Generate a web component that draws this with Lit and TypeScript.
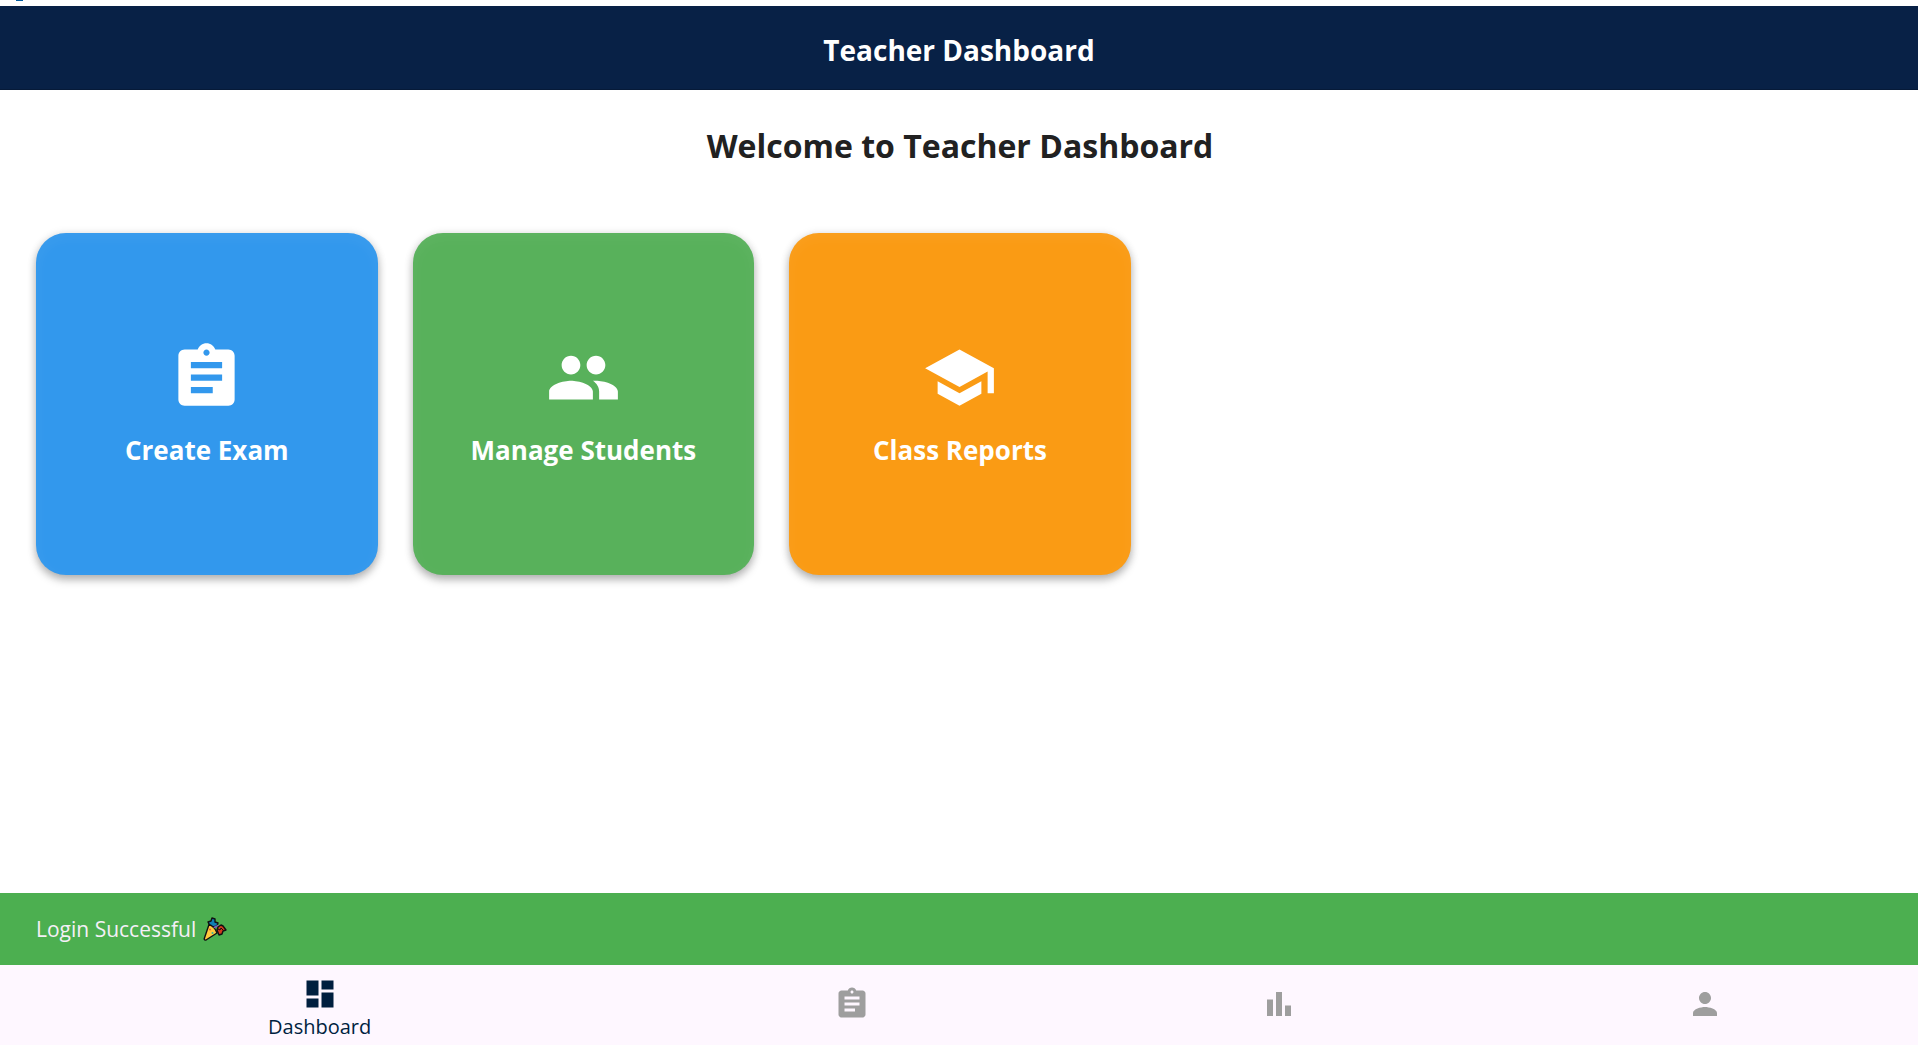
import { LitElement, html, css, svg } from "lit";
import { customElement, state } from "lit/decorators.js";
import { classMap } from "lit/directives/class-map.js";

const assignment = svg`<path fill-rule="evenodd" d="M19 3h-4.180C14.400 1.840 13.300 1 12 1c-1.300 0-2.400.840-2.820 2H5c-1.100 0-2 .900-2 2v14c0 1.100.900 2 2 2h14c1.100 0 2-.900 2-2V5c0-1.100-.900-2-2-2zm-7 0c.550 0 1 .450 1 1s-.450 1-1 1-1-.450-1-1 .450-1 1-1zm2 14H7v-2h7v2zm3-4H7v-2h10v2zm0-4H7V7h10v2z"/>`;
const people = svg`<path d="M16 11c1.660 0 2.990-1.340 2.990-3S17.660 5 16 5s-3 1.340-3 3 1.340 3 3 3zm-8 0c1.660 0 2.990-1.340 2.990-3S9.660 5 8 5 5 6.340 5 8s1.340 3 3 3zm0 2c-2.330 0-7 1.170-7 3.500V19h14v-2.500C15 14.170 10.330 13 8 13zm8 0c-.290 0-.620.020-.970.050C16.190 13.890 17 15.020 17 16.500V19h6v-2.500c0-2.330-4.670-3.500-7-3.500z"/>`;
const school = svg`<path d="M5 13.180v4L12 21l7-3.820v-4L12 17l-7-3.820zM12 3L1 9l11 6 9-4.910V17h2V9L12 3z"/>`;
const dashboard = svg`<path d="M3 13h8V3H3v10zm0 8h8v-6H3v6zm10 0h8V11h-8v10zm0-18v6h8V3h-8z"/>`;
const bars = svg`<path d="M4 9h4v11H4zM16 13h4v7h-4zM10 4h4v16h-4z"/>`;
const person = svg`<path d="M12 12c2.210 0 4-1.790 4-4s-1.790-4-4-4-4 1.790-4 4 1.790 4 4 4zm0 2c-2.670 0-8 1.340-8 4v2h16v-2c0-2.660-5.330-4-8-4z"/>`;

const actions = [
  { label: "Create Exam", tone: "blue", icon: assignment },
  { label: "Manage Students", tone: "green", icon: people },
  { label: "Class Reports", tone: "orange", icon: school },
];

const tabs = [
  { label: "Dashboard", icon: dashboard },
  { label: "Exams", icon: assignment },
  { label: "Reports", icon: bars },
  { label: "Profile", icon: person },
];

@customElement("app-root")
export class AppRoot extends LitElement {
  @state() private selected = 0;

  static styles = css`
    :host {
      display: flex;
      flex-direction: column;
      min-height: 100vh;
      background: #ffffff;
      color: #212121;
      font-family: "Segoe UI", "Open Sans", "Noto Sans", sans-serif;
    }
    h1, h2 { margin: 0; font-weight: 700; text-align: center; }
    button { border: 0; margin: 0; font: inherit; cursor: pointer; }
    svg { display: block; fill: currentColor; }
    .strip { height: 6px; padding-left: 16px; }
    .mark { width: 7px; height: 1px; background: #005a9e; }
    .bar {
      display: flex;
      align-items: center;
      justify-content: center;
      height: 84px;
      box-sizing: border-box;
      padding-top: 4px;
      background: #082146;
      border-bottom: 1px solid #061a38;
      color: #ffffff;
    }
    .bar h1 { font-size: 28px; line-height: 40px; }
    main { flex: 1; padding: 34px 34px 34px 36px; }
    .welcome { font-size: 32px; line-height: 44px; }
    .grid {
      display: grid;
      grid-template-columns: repeat(auto-fill, minmax(300px, 1fr));
      gap: 35px;
      margin-top: 65px;
    }
    .card {
      display: flex;
      flex-direction: column;
      align-items: center;
      justify-content: center;
      gap: 17px;
      aspect-ratio: 1;
      padding: 0;
      border-radius: 30px;
      color: #ffffff;
      font-size: 26px;
      line-height: 36px;
      font-weight: 700;
      box-shadow: 0 5px 8px rgba(0, 0, 0, 0.25), 0 1px 10px rgba(0, 0, 0, 0.12),
        inset 0 4px 16px rgba(255, 255, 255, 0.05);
    }
    .card svg { width: 75px; height: 75px; }
    .blue { background: #3298ed; }
    .green { background: #58b15b; }
    .orange { background: #fa9b14; }
    .snack {
      display: flex;
      align-items: center;
      gap: 7px;
      height: 72px;
      padding: 0 36px;
      background: #4caf50;
      color: #f5eff7;
      font-size: 21px;
      line-height: 30px;
    }
    .party { width: 24px; height: 24px; }
    nav { display: flex; height: 80px; background: #fef7ff; }
    .tab {
      flex: 2;
      display: flex;
      flex-direction: column;
      align-items: center;
      padding: 21px 0 0;
      background: none;
      color: #9e9e9e;
      font-size: 20px;
      line-height: 30px;
    }
    .tab svg { width: 36px; height: 36px; }
    .tab.on { flex: 3; color: #001f3f; padding-top: 11px; }
  `;

  render() {
    return html`
      <div class="strip"><div class="mark"></div></div>
      <header class="bar"><h1>Teacher Dashboard</h1></header>
      <main>
        <h2 class="welcome">Welcome to Teacher Dashboard</h2>
        <div class="grid">
          ${actions.map(
            (a) => html`<button class="card ${a.tone}">
              <svg viewBox="0 0 24 24" aria-hidden="true">${a.icon}</svg>
              <span>${a.label}</span>
            </button>`
          )}
        </div>
      </main>
      <div class="snack" role="status">
        <span>Login Successful</span>
        <svg class="party" viewBox="0 0 24 24" aria-hidden="true">
          <g stroke="#111111" stroke-width="1.400" stroke-linejoin="round">
            <path d="M5 5l3-1 1-3 3 1v3l3 1-1 3-4 1-3-1z" fill="#0f7fb5"/>
            <path d="M14 13l1-3 3-2 2 1 3 4-3 1-1 3-3 1z" fill="#d13a1e"/>
            <path d="M6 7.500C9 8.500 13 12 14 16L3 23c-1 .500-2-.500-1.700-1.500z" fill="#ffc83d"/>
          </g>
          <path d="M11 11c1-2 3-1 4-3" fill="none" stroke="#7a5cc8" stroke-width="1.600"/>
          <path d="M15 12l2 1 1-2 2 2" fill="none" stroke="#111111" stroke-width="1"/>
          <circle cx="7" cy="12.500" r="1" fill="#f0503c"/>
          <circle cx="9.500" cy="16" r="1" fill="#35b6a0"/>
        </svg>
      </div>
      <nav aria-label="Main">
        ${tabs.map(
          (t, i) => html`<button
            class=${classMap({ tab: true, on: i === this.selected })}
            aria-label=${t.label}
            @click=${() => (this.selected = i)}
          >
            <svg viewBox="0 0 24 24" aria-hidden="true">${t.icon}</svg>
            ${i === this.selected ? html`<span>${t.label}</span>` : ""}
          </button>`
        )}
      </nav>
    `;
  }
}
